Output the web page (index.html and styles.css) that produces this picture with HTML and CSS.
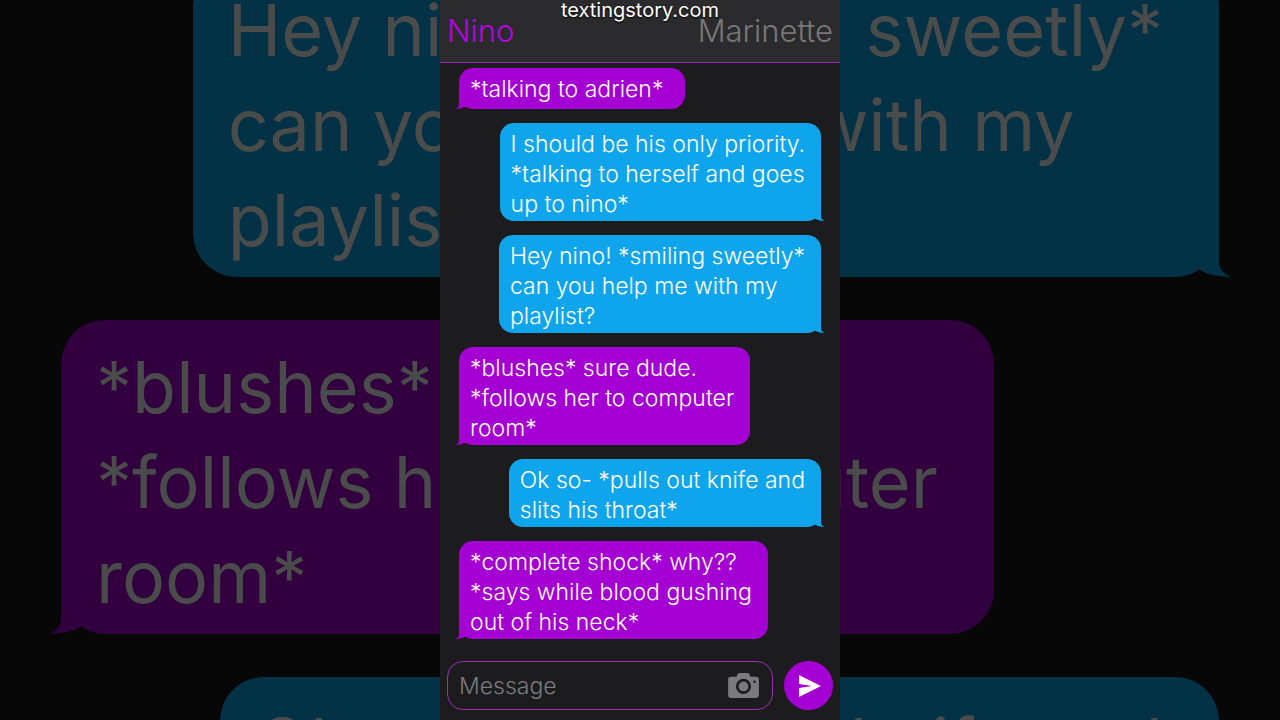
FILE: index.html
```html
<!DOCTYPE html>
<html lang="en">
<head>
    <meta charset="UTF-8">
    <meta name="viewport" content="width=device-width, initial-scale=1.0">
    <title>Texting Story</title>
    <link rel="stylesheet" href="styles.css">
</head>
<body>
    <div class="backdrop" aria-hidden="true">
        <p class="bubble sent">Hey nino! *smiling sweetly*<br>can you help me with my<br>playlist?</p>
        <p class="bubble received">*blushes* sure dude.<br>*follows her to computer<br>room*</p>
        <p class="bubble sent">Ok so- *pulls out knife and<br>slits his throat*</p>
    </div>
    <div class="phone">
        <header class="top-bar">
            <h1 class="name">Nino</h1>
            <span class="name other">Marinette</span>
            <p class="watermark">textingstory.com</p>
        </header>
        <main class="chat">
            <p class="bubble received single">*talking to adrien*</p>
            <p class="bubble sent">I should be his only priority.<br>*talking to herself and goes<br>up to nino*</p>
            <p class="bubble sent">Hey nino! *smiling sweetly*<br>can you help me with my<br>playlist?</p>
            <p class="bubble received">*blushes* sure dude.<br>*follows her to computer<br>room*</p>
            <p class="bubble sent">Ok so- *pulls out knife and<br>slits his throat*</p>
            <p class="bubble received">*complete shock* why??<br>*says while blood gushing<br>out of his neck*</p>
        </main>
        <form class="composer">
            <div class="field">
                <input type="text" class="message" placeholder="Message" aria-label="Message">
                <button type="button" class="camera" aria-label="Camera">
                    <svg viewBox="0 0 32 26" width="31" height="25">
                        <path fill="#7b7b7d" d="M3 4h5.500l1.500-3q.5-1 1.500-1h9q1 0 1.500 1l1.500 3h5.500q3 0 3 3v16q0 3-3 3H3q-3 0-3-3V7q0-3 3-3z"/>
                        <circle cx="16" cy="14" r="6.500" fill="none" stroke="#1c1c1e" stroke-width="2.800"/>
                        <circle cx="27.500" cy="9" r="1.300" fill="#1c1c1e"/>
                    </svg>
                </button>
            </div>
            <button type="submit" class="send" aria-label="Send">
                <svg viewBox="0 0 22 22" width="22" height="22">
                    <path fill="#fff" d="M0 0 22 11 0 22V13L13 11 0 9z"/>
                </svg>
            </button>
        </form>
    </div>
</body>
</html>
```
FILE: styles.css
```css
*{
    margin: 0;
    padding: 0;
    box-sizing: border-box;
}

body{
    height: 100vh;
    display: flex;
    justify-content: center;
    background-color: #070708;
    font-family: Inter, "Liberation Sans", sans-serif;
    font-weight: 340;
    overflow: hidden;
}

.phone{
    position: relative;
    width: 100%;
    max-width: 400px;
    height: 100vh;
    display: flex;
    flex-direction: column;
    background-color: #1c1c1e;
}

/* header */
.top-bar{
    position: relative;
    display: flex;
    justify-content: space-between;
    padding: 12px 7px;
    background-color: #2b2b2d;
    border-bottom: 1px solid #9a22b4;
}

.name{
    font-size: 31px;
    line-height: 38px;
    font-weight: 340;
    color: #b405e2;
}

.other{
    color: #78787a;
}

.watermark{
    position: absolute;
    top: 0;
    left: 0;
    width: 100%;
    text-align: center;
    font-size: 20px;
    line-height: 20px;
    font-weight: 400;
    color: #fff;
    text-shadow: 0 1px 2px #000;
}

/* messages */
.chat{
    flex: 1;
    display: flex;
    flex-direction: column;
    gap: 14px;
    padding: 5px 19px;
}

.bubble{
    position: relative;
    padding: 6px 16px 2px 11px;
    border-radius: 14px;
    font-size: 23px;
    line-height: 30px;
    white-space: nowrap;
    color: #fff;
}

.single{
    padding: 6px 22px 5px 11px;
}

.received{
    align-self: flex-start;
    background-color: #a500d3;
}

.sent{
    align-self: flex-end;
    background-color: #0ea5ec;
}

.bubble::after{
    content: "";
    position: absolute;
    right: -4px;
    bottom: 0;
    width: 18px;
    height: 14px;
    background-color: inherit;
    clip-path: path("M14 0V9Q14 13 18 14Q11 14 7 11L6 0Z");
}

.received::after{
    right: auto;
    left: -4px;
    transform: scaleX(-1);
}

/* message box */
.composer{
    display: flex;
    gap: 11px;
    padding: 0 7px 10px;
}

.field{
    flex: 1;
    min-width: 0;
    display: flex;
    align-items: center;
    padding: 0 13px 0 11px;
    border: 1px solid #9a2fb2;
    border-radius: 16px;
}

.message{
    flex: 1;
    min-width: 0;
    border: none;
    outline: none;
    background: none;
    font-family: inherit;
    font-size: 23px;
    font-weight: 340;
    color: #fff;
}

.message::placeholder{
    color: #7b7b7d;
    opacity: 1;
}

.camera, .send{
    flex: none;
    display: flex;
    align-items: center;
    justify-content: center;
    border: none;
    background: none;
}

.send{
    width: 49px;
    height: 49px;
    padding-left: 2px;
    border-radius: 50%;
    background-color: #a500d3;
}

/* enlarged conversation behind the phone */
.backdrop{
    position: absolute;
    top: 0;
    left: 0;
    width: 100%;
    height: 100%;
    display: flex;
    flex-direction: column;
    gap: 43px;
    padding: 0 61px;
    overflow: hidden;
}

.backdrop .bubble{
    flex: none;
    padding: 19px 56px 10px 35px;
    border-radius: 44px;
    font-size: 72px;
    line-height: 95px;
    font-weight: 400;
    color: #4a4b4b;
}

.backdrop .bubble:first-child{
    margin-top: -37px;
}

.backdrop .sent{
    background-color: #033145;
}

.backdrop .received{
    background-color: #32003f;
}

.backdrop .bubble::after{
    right: -13px;
    width: 57px;
    height: 44px;
    clip-path: path("M44 0V28Q44 40 57 44Q36 44 23 36L20 0Z");
}

.backdrop .received::after{
    right: auto;
    left: -13px;
}
```
